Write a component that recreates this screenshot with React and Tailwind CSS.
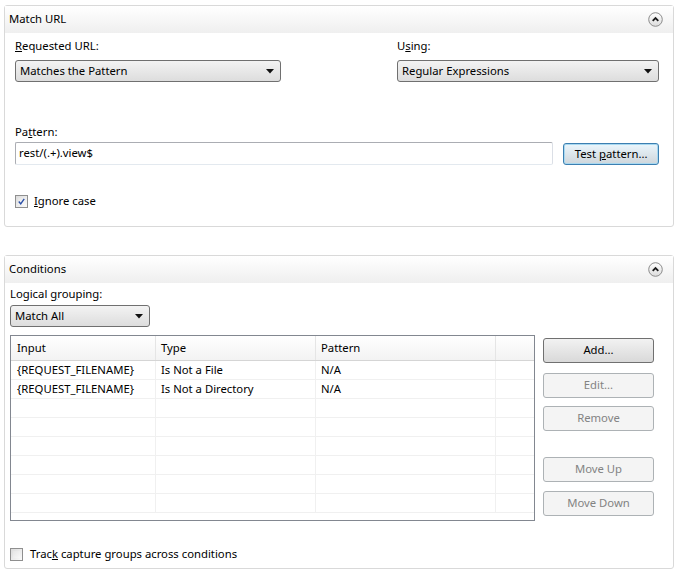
import React from 'react'

const font = { fontFamily: '"Noto Sans", "Open Sans", Arial, sans-serif' }

// Win7 style collapse chevron
const Collapse = () => (
    <svg width="15" height="15" viewBox="0 0 15 15" className="shrink-0">
        <defs>
            <linearGradient id="cg" x1="0" y1="0" x2="0" y2="1">
                <stop offset="0" stopColor="#ffffff" />
                <stop offset="1" stopColor="#dcdcdc" />
            </linearGradient>
        </defs>
        <circle cx="7.5" cy="7.5" r="6.8" fill="url(#cg)" stroke="#8c8c8c" strokeWidth="1" />
        <path d="M4.7 8.8 L7.5 6 L10.3 8.8" fill="none" stroke="#1a1a1a" strokeWidth="1.8" />
    </svg>
)

const Select = ({ value, className }) => (
    <div
        className={`flex items-center justify-between h-[22px] pl-[4px] pr-[6px] border border-[#707070] rounded-[3px] bg-gradient-to-b from-[#f3f3f3] to-[#dddddd] text-[11.3px] text-black ${className}`}
    >
        <span>{value}</span>
        <svg width="8" height="5" viewBox="0 0 8 5">
            <path d="M0 0 H8 L4 4.5 Z" fill="#111" />
        </svg>
    </div>
)

const Checkbox = ({ checked }) => (
    <div className="w-[13px] h-[13px] border border-[#8f8f8f] bg-gradient-to-br from-[#dcdcdc] to-[#fafafa] p-[2px] shrink-0">
        <div className="w-full h-full bg-gradient-to-br from-[#e6e6e6] to-[#f8f8f8] flex items-center justify-center">
            {checked && (
                <svg width="9" height="9" viewBox="0 0 9 9">
                    <path d="M1 4.5 L3.5 7.5 L8 1" fill="none" stroke="#2a4fa8" strokeWidth="1.8" />
                </svg>
            )}
        </div>
    </div>
)

const SideButton = ({ label, enabled }) => (
    <div
        className={`w-[111px] h-[25px] flex items-center justify-center rounded-[3px] border text-[11.3px] ${
            enabled
                ? 'border-[#707070] bg-gradient-to-b from-[#f2f2f2] to-[#d9d9d9] text-black'
                : 'border-[#adb2b5] bg-[#f4f4f4] text-[#838383]'
        }`}
    >
        {label}
    </div>
)

const Panel = ({ title, children, className }) => (
    <div className={`border border-[#d9d9d9] rounded-[3px] bg-white ${className}`}>
        <div className="h-[27px] flex items-center justify-between pl-[4px] pr-[10px] bg-gradient-to-b from-[#ffffff] to-[#efefef] text-[11.3px] text-black">
            <span>{title}</span>
            <Collapse />
        </div>
        {children}
    </div>
)

const rows = [
    ['{REQUEST_FILENAME}', 'Is Not a File', 'N/A'],
    ['{REQUEST_FILENAME}', 'Is Not a Directory', 'N/A'],
    ['', '', ''],
    ['', '', ''],
    ['', '', ''],
    ['', '', ''],
    ['', '', ''],
    ['', '', ''],
]

export default function App() {
    return (
        <div className="w-[681px] h-[575px] bg-white overflow-hidden pt-[5px] pl-[4px] pr-[7px] text-[11.3px]" style={font}>
            <Panel title="Match URL" className="h-[222px]">
                <div className="pl-[10px] pr-[14px] pt-[5px]">
                    <div className="flex justify-between">
                        <div className="w-[266px]">
                            <div className="leading-[16px] mb-[6px]">
                                <span className="underline">R</span>equested URL:
                            </div>
                            <Select value="Matches the Pattern" />
                        </div>
                        <div className="w-[262px]">
                            <div className="leading-[16px] mb-[6px]">
                                U<span className="underline">s</span>ing:
                            </div>
                            <Select value="Regular Expressions" />
                        </div>
                    </div>
                    <div className="mt-[42px] leading-[16px] mb-[1px]">
                        Pa<span className="underline">t</span>tern:
                    </div>
                    <div className="flex items-center gap-[10px]">
                        <div className="w-[540px] h-[23px] border border-[#abadb3] border-b-[#e3e9ef] border-r-[#dbdfe6] rounded-[2px] flex items-center pl-[3px]">
                            <span>rest/(.+).view$</span>
                        </div>
                        <div className="w-[96px] h-[22px] rounded-[3px] border border-[#3c7fb1] bg-gradient-to-b from-[#eaf6fd] to-[#cfd6db] flex items-center justify-center shadow-[inset_0_0_0_1px_#a8d8f0] mt-[2px]">
                            <span>
                                Test <span className="underline">p</span>attern...
                            </span>
                        </div>
                    </div>
                    <div className="flex items-center gap-[6px] mt-[28px]">
                        <Checkbox checked />
                        <span>
                            <span className="underline">I</span>gnore case
                        </span>
                    </div>
                </div>
            </Panel>

            <Panel title="Conditions" className="mt-[28px] h-[314px]">
                <div className="pl-[5px] pr-[14px] pt-[3px]">
                    <div className="leading-[16px] mb-[3px]">
                        Logical <span className="underline">g</span>rouping:
                    </div>
                    <Select value="Match All" className="w-[140px]" />
                    <div className="flex mt-[8px] gap-[8px]">
                        <div className="w-[525px] h-[186px] border border-[#828790] overflow-hidden">
                            <div className="flex h-[25px] bg-gradient-to-b from-[#ffffff] to-[#f3f3f3] border-b border-[#d5d5d5]">
                                <div className="w-[145px] pl-[6px] flex items-center border-r border-[#e5e5e5]">Input</div>
                                <div className="w-[160px] pl-[5px] flex items-center border-r border-[#e5e5e5]">Type</div>
                                <div className="w-[180px] pl-[5px] flex items-center border-r border-[#e5e5e5]">Pattern</div>
                                <div className="flex-1" />
                            </div>
                            {rows.map((r, i) => (
                                <div key={i} className="flex h-[19px] border-b border-[#f0f0f0]">
                                    <div className="w-[145px] pl-[6px] flex items-center border-r border-[#f0f0f0]">{r[0]}</div>
                                    <div className="w-[160px] pl-[5px] flex items-center border-r border-[#f0f0f0]">{r[1]}</div>
                                    <div className="w-[180px] pl-[5px] flex items-center border-r border-[#f0f0f0]">{r[2]}</div>
                                    <div className="flex-1" />
                                </div>
                            ))}
                        </div>
                        <div className="flex flex-col pt-[3px]">
                            <SideButton label="Add..." enabled />
                            <div className="mt-[10px]"><SideButton label="Edit..." /></div>
                            <div className="mt-[8px]"><SideButton label="Remove" /></div>
                            <div className="mt-[26px]"><SideButton label="Move Up" /></div>
                            <div className="mt-[9px]"><SideButton label="Move Down" /></div>
                        </div>
                    </div>
                    <div className="flex items-center gap-[7px] mt-[25px]">
                        <Checkbox />
                        <span>
                            Trac<span className="underline">k</span> capture groups across conditions
                        </span>
                    </div>
                </div>
            </Panel>
        </div>
    )
}
